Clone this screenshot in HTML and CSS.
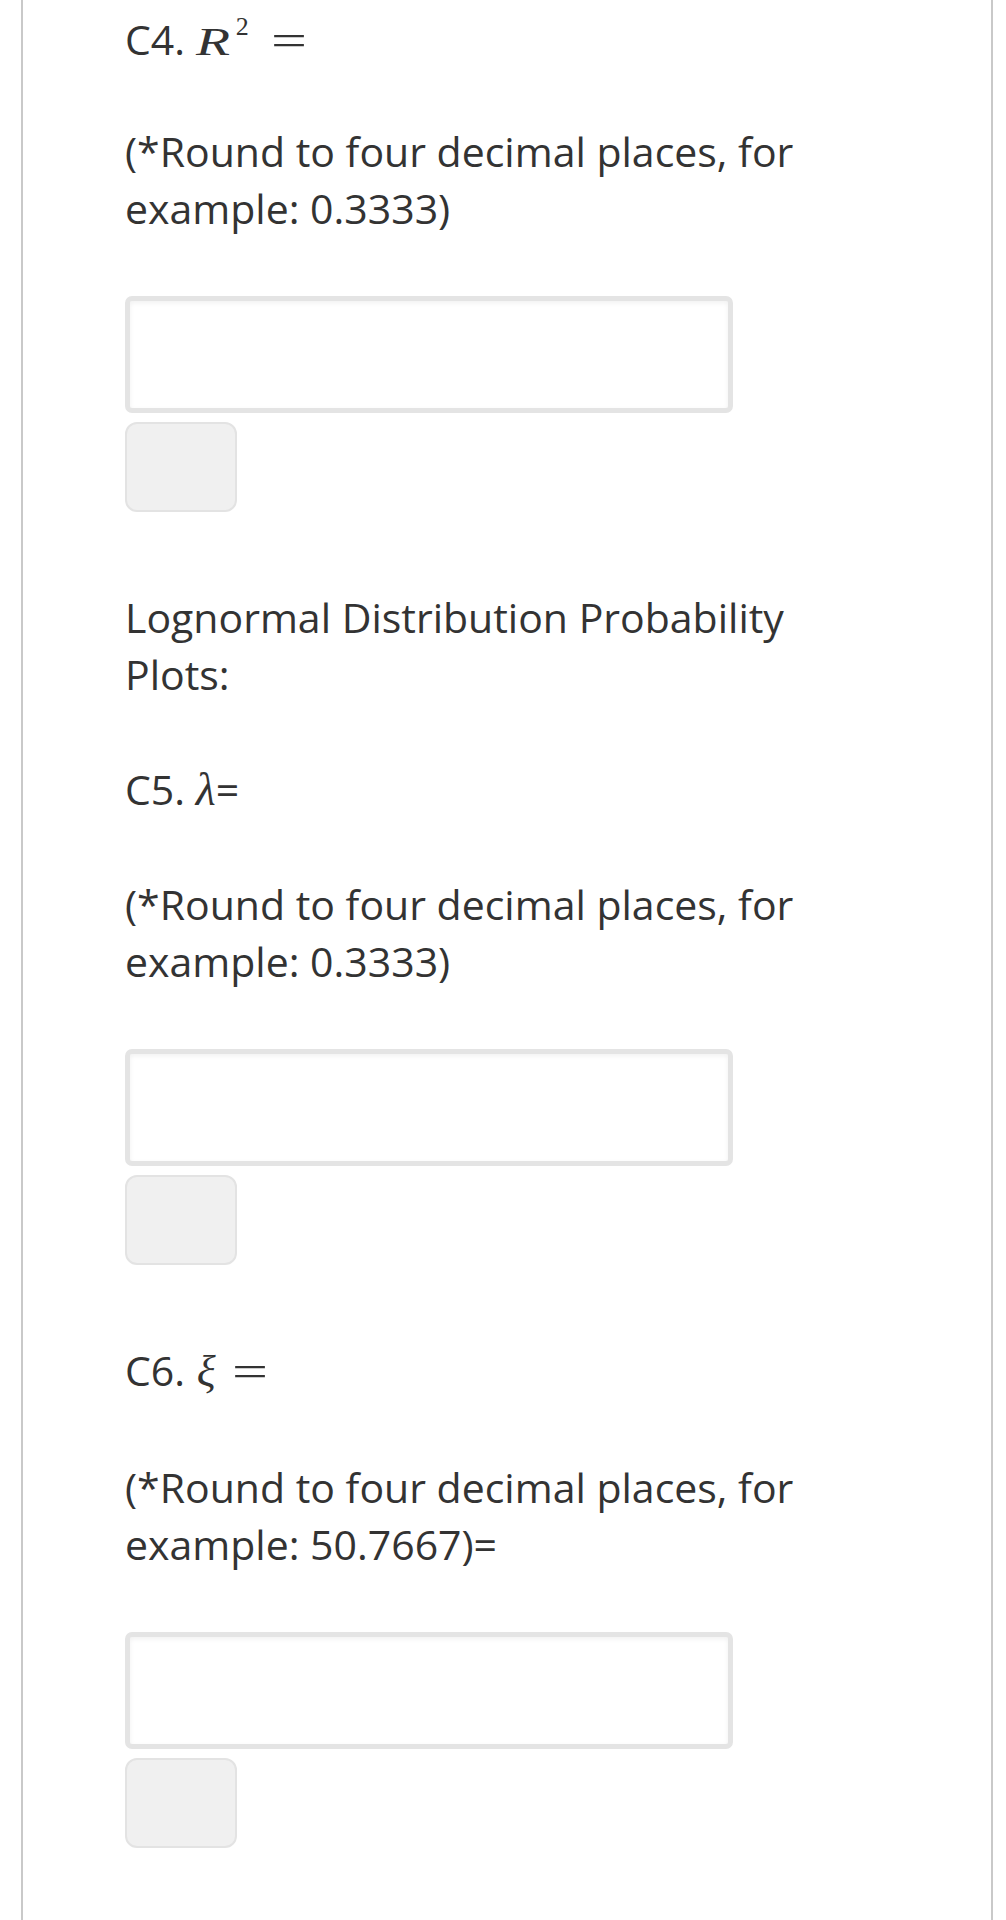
FILE: index.html
```html
<!DOCTYPE html>
<html lang="en">
<head>
    <meta charset="UTF-8">
    <meta name="viewport" content="width=device-width, initial-scale=1.0">
    <title>Homework Part C</title>
    <link rel="stylesheet" href="styles.css">
</head>
<body>
    <div class="page">
        <div class="content">
            <p class="prompt prompt-first">C4. <span class="math"><i class="var var-r">R</i><sup class="sup">2</sup></span> <span class="math-eq">=</span></p>
            <p class="note">(*Round to four decimal places, for example: 0.3333)</p>
            <input class="answer" type="text">
            <button class="check" type="button"></button>

            <p class="heading">Lognormal Distribution Probability Plots:</p>

            <p class="prompt">C5. <i class="var var-lambda">λ</i>=</p>
            <p class="note">(*Round to four decimal places, for example: 0.3333)</p>
            <input class="answer" type="text">
            <button class="check" type="button"></button>

            <p class="prompt prompt-tall">C6. <i class="var var-xi">ξ</i> <span class="math-eq math-eq-tight">=</span></p>
            <p class="note">(*Round to four decimal places, for example: 50.7667)=</p>
            <input class="answer" type="text">
            <button class="check" type="button"></button>
        </div>
    </div>
</body>
</html>
```

FILE: styles.css
```css
* {
    margin: 0;
    padding: 0;
    box-sizing: border-box;
}

body {
    background: #fff;
    font-family: 'Open Sans', 'Noto Sans', sans-serif;
    font-size: 41px;
    line-height: 57px;
    color: #333;
}

.page {
    margin-left: 21px;
    width: 972px;
    min-height: 1920px;
    border-left: 2px solid #c9c9c9;
    border-right: 2px solid #c9c9c9;
}

.content {
    padding: 11px 0 0 102px;
    width: 802px;
}

.prompt {
    margin-bottom: 58px;
}

.prompt-first {
    margin-bottom: 55px;
}

.prompt-tall {
    margin-bottom: 60px;
}

.note {
    margin-bottom: 59px;
}

.heading {
    margin-bottom: 58px;
}

.math {
    font-family: 'Liberation Serif', 'DejaVu Serif', serif;
    line-height: 0;
}

.var {
    font-family: 'Liberation Serif', 'DejaVu Serif', serif;
    font-style: italic;
    font-weight: normal;
    line-height: 0;
}

.var-r {
    display: inline-block;
    font-size: 41px;
    transform: scaleX(1.36);
    transform-origin: left;
    margin-right: 10px;
}

.sup {
    font-size: 26px;
    line-height: 0;
    vertical-align: 20px;
    margin-left: 5px;
}

.var-lambda {
    font-size: 46px;
}

.var-xi {
    font-size: 44px;
    margin-left: 1px;
}

.math-eq {
    display: inline-block;
    font-family: 'Liberation Serif', 'DejaVu Serif', serif;
    font-size: 44px;
    line-height: 0;
    transform: scaleX(1.45);
    transform-origin: left;
    margin-left: 12px;
}

.math-eq-tight {
    margin-left: 6px;
}

.answer {
    display: block;
    width: 608px;
    height: 117px;
    border: 5px solid #e4e4e4;
    border-radius: 7px;
    background: #fff;
    box-shadow: inset 0 2px 5px rgba(0, 0, 0, 0.06);
    margin-bottom: 9px;
    outline: none;
}

.check {
    display: block;
    width: 112px;
    height: 90px;
    background: #f0f0f0;
    border: 2px solid #e3e3e3;
    border-radius: 12px;
    margin-bottom: 77px;
}
```
